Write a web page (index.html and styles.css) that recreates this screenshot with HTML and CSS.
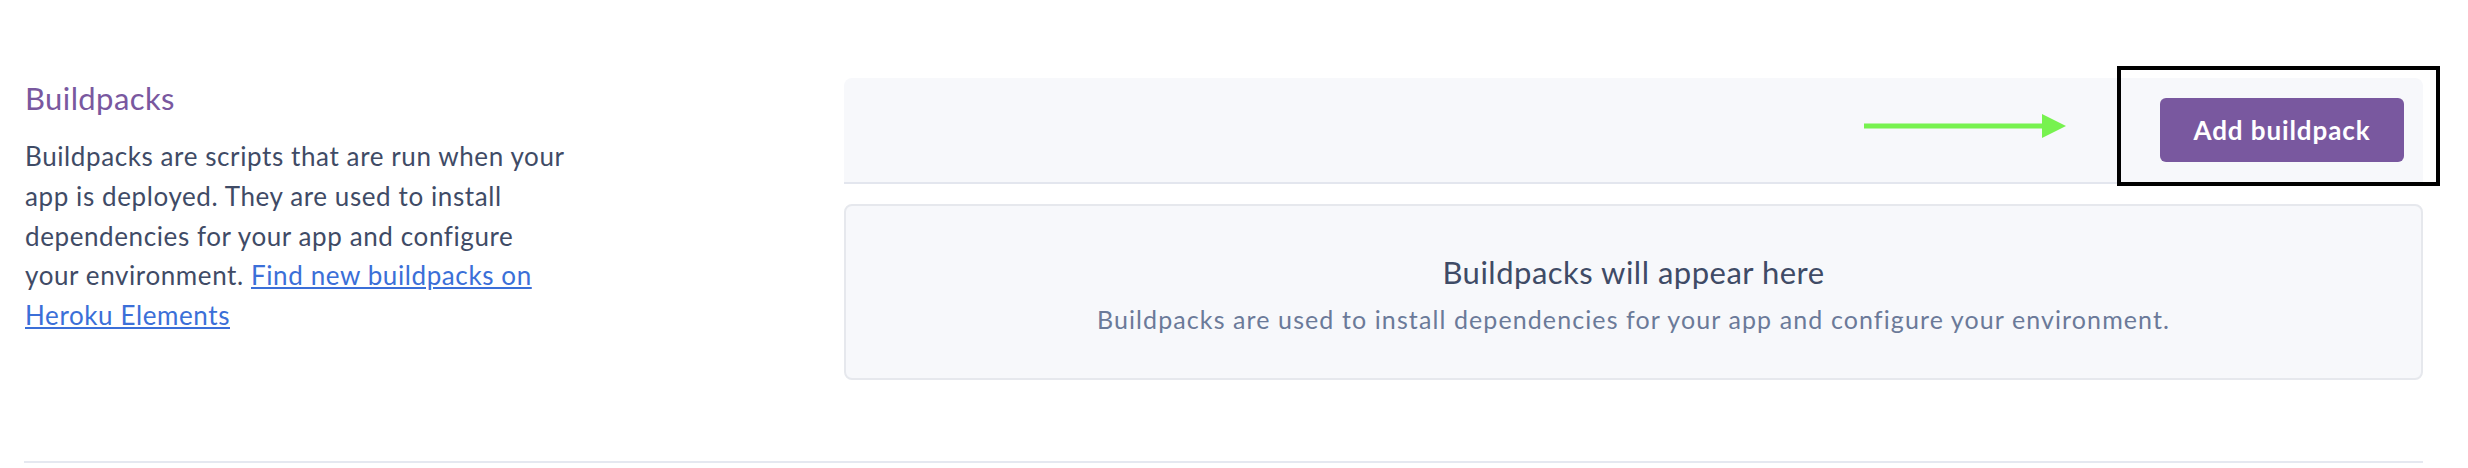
FILE: index.html
```html
<!DOCTYPE html>
<html lang="en">
<head>
<meta charset="utf-8">
<title>Buildpacks</title>
<link rel="stylesheet" href="styles.css">
</head>
<body>
<main class="page">
  <section class="section">
    <div class="info">
      <h3 class="info-title">Buildpacks</h3>
      <p class="info-text">Buildpacks are scripts that are run when your app is deployed. They are used to install dependencies for your app and configure your environment. <a href="#" class="info-link">Find new buildpacks on Heroku Elements</a></p>
    </div>
    <div class="content">
      <div class="toolbar">
        <button class="btn-primary" type="button">Add buildpack</button>
        <svg class="arrow" width="204" height="26" viewBox="0 0 204 26" aria-hidden="true">
          <rect x="0" y="10.5" width="180" height="5" fill="#77f24f"/>
          <polygon points="178,1 202,13 178,25" fill="#77f24f"/>
        </svg>
        <div class="highlight"></div>
      </div>
      <div class="empty">
        <div class="empty-title">Buildpacks will appear here</div>
        <div class="empty-text">Buildpacks are used to install dependencies for your app and configure your environment.</div>
      </div>
    </div>
  </section>
</main>
</body>
</html>
```

FILE: styles.css
```css
* { box-sizing: border-box; }

html, body {
  margin: 0;
  padding: 0;
  background: #ffffff;
}

body {
  font-family: Lato, "Open Sans", sans-serif;
  color: #3f4b66;
}

.page {
  padding: 0 45px 0 24px;
}

.section {
  display: grid;
  grid-template-columns: 820px 1fr;
  padding: 78px 0 81px;
  border-bottom: 2px solid #e5e8f0;
}

.info {
  padding-left: 1px;
}

.info-title {
  margin: 0;
  font-size: 31px;
  font-weight: 400;
  letter-spacing: 0.4px;
  line-height: 40px;
  color: #79589f;
}

.info-text {
  margin: 19px 0 0;
  width: 545px;
  font-size: 26px;
  letter-spacing: 0.6px;
  line-height: 39.8px;
  color: #3f4b66;
}

.info-link {
  color: #3b6fd8;
  text-decoration: underline;
}

.content {
  display: flex;
  flex-direction: column;
  gap: 20px;
}

.toolbar {
  position: relative;
  display: flex;
  justify-content: flex-end;
  align-items: center;
  height: 106px;
  padding-right: 19px;
  background: #f7f8fb;
  border-radius: 8px 8px 0 0;
  border-bottom: 2px solid #e3e6ee;
}

.btn-primary {
  width: 244px;
  height: 64px;
  border: 0;
  border-radius: 6px;
  background: #79589f;
  color: #ffffff;
  font-family: Lato, "Open Sans", sans-serif;
  font-size: 26px;
  font-weight: 700;
  letter-spacing: 0.9px;
  cursor: pointer;
}

.arrow {
  position: absolute;
  left: 1020px;
  top: 35px;
}

.highlight {
  position: absolute;
  left: 1273px;
  top: -12px;
  width: 323px;
  height: 120px;
  border: 4px solid #000000;
}

.empty {
  height: 176px;
  display: flex;
  flex-direction: column;
  align-items: center;
  justify-content: center;
  gap: 14px;
  padding-top: 4px;
  background: #f7f8fb;
  border: 2px solid #e6e8ed;
  border-radius: 8px;
}

.empty-title {
  font-size: 31px;
  letter-spacing: 0.5px;
  line-height: 36px;
  color: #3f4b66;
}

.empty-text {
  font-size: 25px;
  letter-spacing: 1.1px;
  line-height: 30px;
  color: #6b7a99;
}
```
